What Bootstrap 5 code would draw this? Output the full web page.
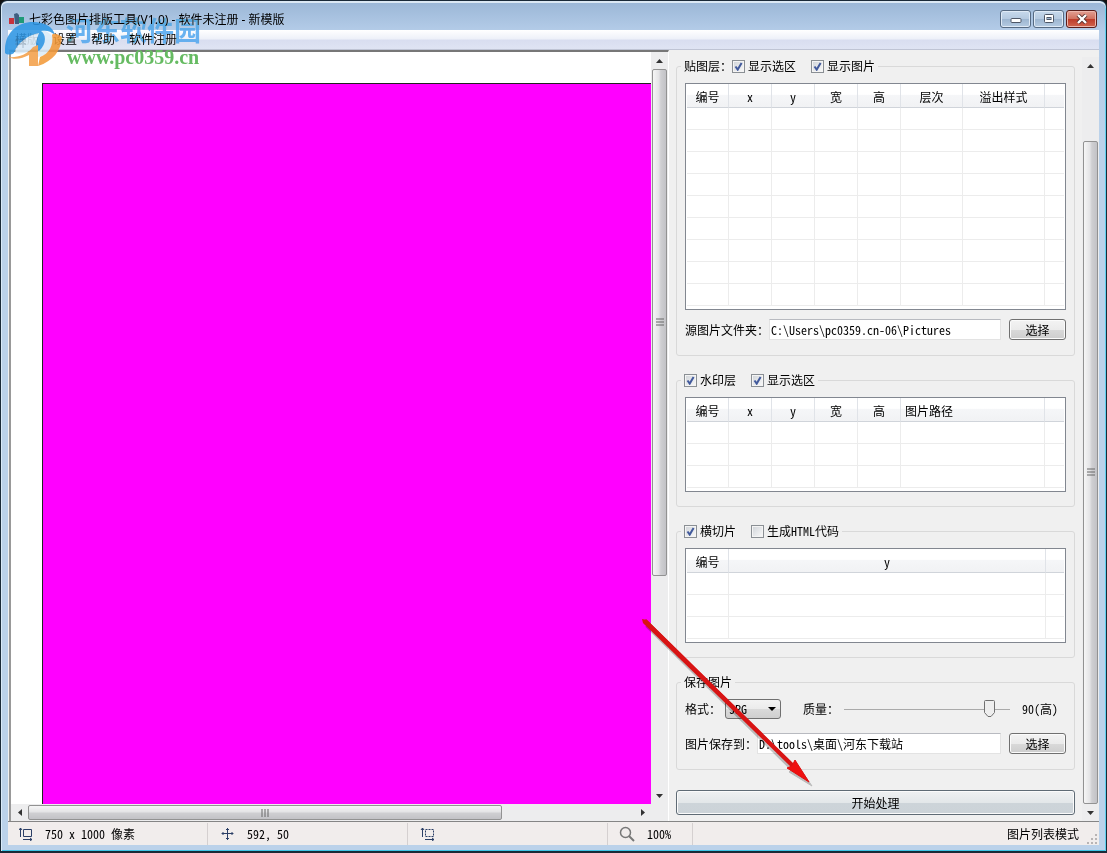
<!DOCTYPE html>
<html lang="zh-CN">
<head>
<meta charset="utf-8">
<meta name="viewport" content="width=device-width, initial-scale=1">
<title>七彩色图片排版工具</title>
<link href="https://cdn.jsdelivr.net/npm/bootstrap@5.3.0/dist/css/bootstrap.min.css" rel="stylesheet">
<style>
body{font:12px/16px "Noto Sans Mono CJK SC","Liberation Mono","Noto Sans CJK SC",monospace;color:#000;background:#111}
.win{min-height:100vh;border:1px solid #1a2a38;border-bottom-width:2px;border-radius:7px 7px 0 0;padding:0 7px 6px;
  background:linear-gradient(#9ab6d6,#b4cce8 30px,#bbd2ea 140px,#bbd2ea);box-shadow:inset 0 2px 0 #dbe8f4,inset -1px 0 0 #5fd0ee,inset 1px 0 0 #d9eaf8,inset 0 -1px 0 #3fc4e6}
.titlebar{height:29px;padding-left:1px;font-family:"Noto Sans","Noto Sans CJK SC",sans-serif}
.capbtns{gap:2px;margin:6px 2px 0 auto}
.capbtn{width:31px;height:18px;border:1px solid #566a82;border-radius:3px;background:linear-gradient(#c7d9ec,#b4c9e0 50%,#9cb5d0 50%,#b5cbe2);box-shadow:inset 0 0 0 1px #dfeaf6;padding:0}
.capbtn.closer{border-color:#5a1d1a;background:linear-gradient(#e2a094,#d1705f 50%,#bd3a28 50%,#d0654e);box-shadow:inset 0 0 0 1px #ecb6ac}
.capbtn svg{display:block;margin:auto}
.menubar{height:20px;background:linear-gradient(#fff,#eef1f9 45%,#d9def0 55%,#dfe4f3);border-bottom:1px solid #bfc4d4;font-family:"Noto Sans","Noto Sans CJK SC",sans-serif}
.menubar a{color:#000;text-decoration:none;padding:0 7px;line-height:20px}
.work{background:#f0f0f0}
.viewer{border-top:2px solid #777;border-left:2px solid #999;margin-left:1px;border-right:1px solid #fff}
.paper{background:#fff;padding:31px 0 0 31px}
.sheet{background:#f0f;border-top:1px solid #222;border-left:1px solid #222}
.sb{background:#ededee}
.sb.v{flex:none;width:17px}
.sb.h{height:17px}
.sb .arr{flex:0 0 17px;border:0;background:none;padding:0;display:flex;align-items:center;justify-content:center}
.thumb{border:1px solid #929292;border-radius:2px;display:flex;align-items:center;justify-content:center}
.v .thumb{background:linear-gradient(90deg,#f6f6f6,#e4e4e6 45%,#cfcfd2 60%,#c2c2c6);margin:0 1px}
.h .thumb{background:linear-gradient(#f6f6f6,#e4e4e6 45%,#cfcfd2 55%,#c2c2c6);margin:1px 0}
.side{flex:0 0 430px;padding:4px 0 0 7px}
.side form{padding:0 7px 6px 0}
fieldset{border:1px solid #d9d9d9;border-radius:3px;padding:5px 8px 14px;margin-bottom:12px}
fieldset legend{float:none;width:auto;margin:0 0 0 -4px;padding:0 3px;height:24px;font-size:12px;line-height:24px;display:flex;align-items:center}
.tick{display:flex;align-items:center;gap:3px;margin-right:15px}
.tick:last-child{margin-right:0}
.tick input{appearance:none;width:13px;height:13px;margin:0;border:1px solid #8a8f94;background:linear-gradient(135deg,#cfd3d8,#fafafa);box-shadow:inset 0 0 0 1px #f4f4f4}
.tick input:checked{background:url("data:image/svg+xml,%3Csvg xmlns='http://www.w3.org/2000/svg' viewBox='0 0 11 11'%3E%3Cpath d='M2.5 5.5L4.7 8.6L8.6 2' fill='none' stroke='%23425a9c' stroke-width='2'/%3E%3C/svg%3E") center/11px no-repeat,linear-gradient(135deg,#cfd3d8,#fafafa)}
.grid{border:1px solid #828790;background:#fff;padding:0 1px 3px}
.grid table{width:100%;table-layout:fixed;border-collapse:separate;border-spacing:0}
.grid th{height:24px;padding:3px 0 0;font-weight:400;text-align:center;border-right:1px solid #e0e3e8;border-bottom:1px solid #d0d4da;background:linear-gradient(#fff 45%,#f5f6f8 50%,#f1f2f4)}
.grid td{height:22px;padding:0;border-right:1px solid #ececec;border-bottom:1px solid #ececec}
.grid th:last-child,.grid td:last-child{border-right:0}
.c0{width:42px}.c1{width:43px}.c2{width:62px}.c3{width:82px}.c4{width:144px}.c5{width:317px}.cz{width:auto}
.pick{padding-bottom:1px;margin-top:9px}
.fmtrow + .pick{margin-top:14px}
.frm{font-size:12px;line-height:16px;border:1px solid #e3e3e3;border-top-color:#b8bac0;border-radius:0;background:#fff;height:21px;padding:0 1px;color:#000;min-width:0;flex:1}
.wbtn{width:57px;height:21px;font-size:12px;line-height:17px;padding:0;color:#000;border:1px solid #707070;border-radius:3px;background:linear-gradient(#f3f3f3,#ebebeb 50%,#dadada 50%,#cdcdcd);box-shadow:inset 0 0 0 1px #fbfbfb}
.wbtn.go{width:100%;height:25px;margin-top:8px;line-height:22px;border-color:#5f6b75;background:linear-gradient(#eff1f2,#e3e7e9 50%,#cdd4d9 50%,#ccd3d8)}
.combo{appearance:none;width:56px;height:20px;font-size:12px;line-height:16px;padding:0 3px;color:#000;border:1px solid #707070;border-radius:3px;background:url("data:image/svg+xml,%3Csvg xmlns='http://www.w3.org/2000/svg' width='8' height='4'%3E%3Cpath d='M0 0h8L4 4z'/%3E%3C/svg%3E") right 4px center no-repeat,linear-gradient(#f3f3f3,#ebebeb 50%,#dadada 50%,#cfcfcf)}
.qual{margin-left:22px}
.slide{appearance:none;width:166px;height:20px;margin:0 0 0 5px;background:linear-gradient(#aaa,#aaa) center/100% 1px no-repeat}
.slide::-webkit-slider-thumb{appearance:none;width:11px;height:18px;background:url("data:image/svg+xml,%3Csvg xmlns='http://www.w3.org/2000/svg' width='11' height='18'%3E%3Cpath d='M1.5.5h8q1 0 1 1v11L7 16.500H4L.5 12.500v-11q0-1 1-1z' fill='%23eee' stroke='%23707070'/%3E%3C/svg%3E") no-repeat}
.railtop{margin-top:3px}
.status{height:24px;padding-top:1px;background:#f1edec;border-top:1px solid #858585}
.cell{width:200px;border-right:1px solid #d5d0d0;padding-left:11px;height:22px}
.cell.narrow{width:85px}
.cell svg{flex:none}
.wm{position:absolute;left:4px;top:10px;pointer-events:none}
.wm svg{position:absolute;left:0;top:0;opacity:.88}
.wm .cn{position:absolute;left:61px;top:2px;font:700 27px/34px "Noto Sans CJK SC",sans-serif;color:#4fa6ee;mix-blend-mode:darken;opacity:.85;white-space:nowrap}
.wm .url{position:absolute;left:62px;top:35px;font:700 20px/22px "Liberation Serif",serif;color:#66bb62;white-space:nowrap}
.pointer{position:absolute;left:633px;top:611px;pointer-events:none}
</style>
</head>
<body>
<div class="win position-relative d-flex flex-column">
  <header class="titlebar d-flex align-items-center">
    <svg class="mt-2" width="16" height="13"><path d="M0 5h5v6H0z" fill="#c8323c"/><path d="M5 1l3-1 2 2v9H6z" fill="#3f5f80"/><path d="M10 4h5v6h-5z" fill="#1f9a78"/></svg>
    <span class="pt-2 ps-1">七彩色图片排版工具(V1.0) - 软件未注册 - 新模版</span>
    <div class="capbtns d-flex">
      <button class="capbtn" type="button" aria-label="最小化"><svg width="12" height="10"><rect x="1" y="4.500" width="10" height="4" rx="1" fill="#fff" stroke="#4d5666"/></svg></button>
      <button class="capbtn" type="button" aria-label="最大化"><svg width="12" height="10"><rect x="1.500" y=".5" width="9" height="8" rx="1" fill="#fff" stroke="#4d5666"/><rect x="4" y="3.500" width="4" height="2" fill="#9cb5d0" stroke="#4d5666"/></svg></button>
      <button class="capbtn closer" type="button" aria-label="关闭"><svg width="12" height="10"><path d="M2 1l8 8M10 1L2 9" stroke="#54302e" stroke-width="4"/><path d="M2 1l8 8M10 1L2 9" stroke="#fff" stroke-width="2.400"/></svg></button>
    </div>
  </header>
  <nav class="menubar d-flex">
    <a href="#">模版</a><a href="#">设置</a><a href="#">帮助</a><a href="#">软件注册</a>
  </nav>
  <main class="work d-flex flex-grow-1">
    <section class="viewer d-flex flex-column flex-grow-1">
      <div class="d-flex flex-grow-1">
        <div class="paper d-flex flex-grow-1"><div class="sheet flex-grow-1"></div></div>
        <div class="sb v d-flex flex-column">
          <button class="arr" type="button" aria-label="上"><svg width="7" height="4"><path d="M0 4h7L3.500 0z" fill="#333"/></svg></button>
          <div class="thumb" style="flex:506"><svg width="8" height="8"><path d="M0 1h8M0 4h8M0 7h8" stroke="#666"/></svg></div>
          <div style="flex:212"></div>
          <button class="arr" type="button" aria-label="下"><svg width="7" height="4"><path d="M0 0h7L3.500 4z" fill="#333"/></svg></button>
        </div>
      </div>
      <div class="d-flex">
        <div class="sb h d-flex flex-grow-1">
          <button class="arr" type="button" aria-label="左"><svg width="4" height="7"><path d="M4 0v7L0 3.500z" fill="#333"/></svg></button>
          <div class="thumb" style="flex:473"><svg width="8" height="8"><path d="M1 0v8M4 0v8M7 0v8" stroke="#666"/></svg></div>
          <div style="flex:132"></div>
          <button class="arr" type="button" aria-label="右"><svg width="4" height="7"><path d="M0 0v7L4 3.500z" fill="#333"/></svg></button>
        </div>
        <div class="sb v"></div>
      </div>
    </section>
    <aside class="side d-flex">
      <form class="flex-grow-1">
        <fieldset>
          <legend>贴图层：
            <label class="tick"><input type="checkbox" checked>显示选区</label>
            <label class="tick"><input type="checkbox" checked>显示图片</label>
          </legend>
          <div class="grid">
            <table>
              <colgroup><col class="c0"><col class="c1"><col class="c1"><col class="c1"><col class="c1"><col class="c2"><col class="c3"><col class="cz"></colgroup>
              <thead><tr><th>编号</th><th>x</th><th>y</th><th>宽</th><th>高</th><th>层次</th><th>溢出样式</th><th></th></tr></thead>
              <tbody>
                <tr><td></td><td></td><td></td><td></td><td></td><td></td><td></td><td></td></tr>
                <tr><td></td><td></td><td></td><td></td><td></td><td></td><td></td><td></td></tr>
                <tr><td></td><td></td><td></td><td></td><td></td><td></td><td></td><td></td></tr>
                <tr><td></td><td></td><td></td><td></td><td></td><td></td><td></td><td></td></tr>
                <tr><td></td><td></td><td></td><td></td><td></td><td></td><td></td><td></td></tr>
                <tr><td></td><td></td><td></td><td></td><td></td><td></td><td></td><td></td></tr>
                <tr><td></td><td></td><td></td><td></td><td></td><td></td><td></td><td></td></tr>
                <tr><td></td><td></td><td></td><td></td><td></td><td></td><td></td><td></td></tr>
                <tr><td></td><td></td><td></td><td></td><td></td><td></td><td></td><td></td></tr>
              </tbody>
            </table>
          </div>
          <div class="pick d-flex align-items-center">
            <label for="src">源图片文件夹：</label>
            <input id="src" class="frm me-2" value="C:\Users\pc0359.cn-06\Pictures">
            <button class="wbtn" type="button">选择</button>
          </div>
        </fieldset>
        <fieldset>
          <legend>
            <label class="tick"><input type="checkbox" checked>水印层</label>
            <label class="tick"><input type="checkbox" checked>显示选区</label>
          </legend>
          <div class="grid">
            <table>
              <colgroup><col class="c0"><col class="c1"><col class="c1"><col class="c1"><col class="c1"><col class="c4"><col class="cz"></colgroup>
              <thead><tr><th>编号</th><th>x</th><th>y</th><th>宽</th><th>高</th><th class="text-start ps-1">图片路径</th><th></th></tr></thead>
              <tbody>
                <tr><td></td><td></td><td></td><td></td><td></td><td></td><td></td></tr>
                <tr><td></td><td></td><td></td><td></td><td></td><td></td><td></td></tr>
                <tr><td></td><td></td><td></td><td></td><td></td><td></td><td></td></tr>
              </tbody>
            </table>
          </div>
        </fieldset>
        <fieldset>
          <legend>
            <label class="tick"><input type="checkbox" checked>横切片</label>
            <label class="tick"><input type="checkbox">生成HTML代码</label>
          </legend>
          <div class="grid">
            <table>
              <colgroup><col class="c0"><col class="c5"><col class="cz"></colgroup>
              <thead><tr><th>编号</th><th>y</th><th></th></tr></thead>
              <tbody>
                <tr><td></td><td></td><td></td></tr>
                <tr><td></td><td></td><td></td></tr>
                <tr><td></td><td></td><td></td></tr>
              </tbody>
            </table>
          </div>
        </fieldset>
        <fieldset>
          <legend>保存图片</legend>
          <div class="fmtrow d-flex align-items-center">
            <label for="fmt">格式：</label>
            <select id="fmt" class="combo ms-1"><option>JPG</option></select>
            <label for="q" class="qual">质量：</label>
            <input id="q" type="range" class="slide" min="0" max="100" value="90">
            <output for="q" class="ms-auto me-2">90(高)</output>
          </div>
          <div class="pick d-flex align-items-center">
            <label for="dst">图片保存到：</label>
            <input id="dst" class="frm me-2" value="D:\tools\桌面\河东下载站">
            <button class="wbtn" type="button">选择</button>
          </div>
        </fieldset>
        <button class="wbtn go" type="button">开始处理</button>
      </form>
      <div class="sb v railtop d-flex flex-column">
        <button class="arr" type="button" aria-label="上"><svg width="7" height="4"><path d="M0 4h7L3.500 0z" fill="#333"/></svg></button>
        <div style="flex:67"></div>
        <div class="thumb" style="flex:662"><svg width="8" height="8"><path d="M0 1h8M0 4h8M0 7h8" stroke="#666"/></svg></div>
        <button class="arr" type="button" aria-label="下"><svg width="7" height="4"><path d="M0 0h7L3.500 4z" fill="#333"/></svg></button>
      </div>
    </aside>
  </main>
  <footer class="status d-flex align-items-center">
    <div class="cell d-flex align-items-center gap-2"><svg width="14" height="14" fill="none" stroke="#2b3f66"><path d="M4.500 2.500h8v7h-8zM1.500 1v9M0 3l1.500-2L3 3M4 12.500h9M11 11l2 1.500-2 1.500"/></svg><span class="ms-1">750 x 1000 像素</span></div>
    <div class="cell d-flex align-items-center gap-2"><svg class="me-1" width="16" height="12" fill="none" stroke="#2b3f66"><path d="M8.500 0v12M3 5.500h11M7 2L8.500 .5 10 2M7 10l1.500 1.500L10 10M4.500 4L3 5.500 4.500 7M12.500 4L14 5.500 12.500 7"/></svg><span>592, 50</span></div>
    <div class="cell d-flex align-items-center"><svg width="18" height="14" fill="none" stroke="#2b3f66"><path d="M6.500 2.500h8v7h-8z" stroke-dasharray="2 1"/><path d="M3.500 1v9M2 3l1.500-2L5 3M6 12.500h9M13 11l2 1.500-2 1.500"/></svg></div>
    <div class="cell narrow d-flex align-items-center gap-2"><svg class="me-1" width="16" height="16" fill="none" stroke="#777"><circle cx="6.500" cy="6.500" r="5" stroke-width="1.500"/><path d="M10 10l5 5" stroke-width="2"/></svg><span>100%</span></div>
    <div class="ms-auto">图片列表模式</div>
    <svg class="align-self-end ms-2" width="12" height="12" fill="#b8b4b4"><path d="M8 1h2v2H8zM8 5h2v2H8zM4 5h2v2H4zM8 9h2v2H8zM4 9h2v2H4zM0 9h2v2H0z"/></svg>
  </footer>
  <div class="wm">
    <svg width="60" height="58" viewBox="0 0 60 58">
      <path d="M12 30Q20 19 34 19q9 0 13 6 2 10-4 18l-10 3V36l-5 2q-9 6-18 4z" fill="#dcecf8"/>
      <path d="M0 42C-1 22 12 11 28 11c12 0 20 5 22 13-4-4-9-5-14-4 6 4 5 14-2 20-5-2-3-10 0-18-11 2-22 10-25 20-3 2-7 2-9 0z" fill="#2f97e4"/>
      <path d="M3 46c9 1 19-2 25-10l5-2v21h-9V44c-7 4-15 5-21 2z" fill="#f3a04a"/>
      <path d="M33 55c15-5 23-15 24-29-5-4-9-4-10-2 2 10-3 19-12 22z" fill="#f39a3a"/>
      <path d="M10 29h11M10 33h11M12 25v12M18 25v12" stroke="#35506c" opacity=".35"/>
    </svg>
    <span class="cn">河东软件园</span>
    <span class="url">www.pc0359.cn</span>
  </div>
  <svg class="pointer" width="184" height="180" viewBox="634 612 184 180">
    <g transform="translate(2 3)" opacity=".22" stroke="#000" fill="#000"><path d="M645 622L791 766" stroke-width="5"/><path d="M810 783l-23-14 8-8z"/></g>
    <path d="M642 619l5 1 147 144-3 3L643 623z" fill="#d81414"/>
    <path d="M645 620l146 144" stroke="#d81414" stroke-width="3"/>
    <path d="M809 782l-22-14 5-2 3-6z" fill="#f01010" stroke="#e01010"/>
  </svg>
</div>
<script src="https://cdn.jsdelivr.net/npm/bootstrap@5.3.0/dist/js/bootstrap.bundle.min.js"></script>
</body>
</html>
